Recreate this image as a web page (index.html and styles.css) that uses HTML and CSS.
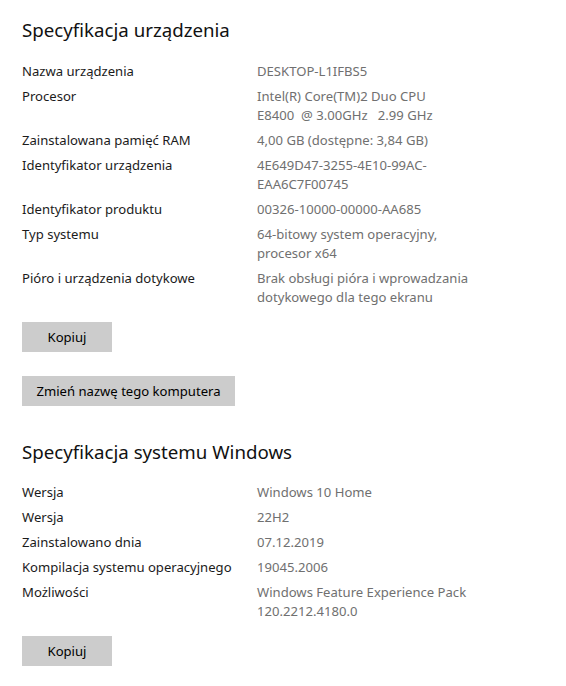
FILE: index.html
```html
<!DOCTYPE html>
<html lang="pl">
<head>
	<meta charset="UTF-8">
	<meta name="viewport" content="width=device-width, initial-scale=1.0">
	<title>Informacje</title>
	<link rel="stylesheet" href="styles.css">
</head>
<body>
	<div id="about">
		<section class="block">
			<h2 class="title">Specyfikacja urządzenia</h2>
			<dl class="specs">
				<dt>Nazwa urządzenia</dt>
				<dd>DESKTOP-L1IFBS5</dd>
				<dt>Procesor</dt>
				<dd>Intel(R) Core(TM)2 Duo CPU<br>E8400&nbsp; @ 3.00GHz &nbsp; 2.99 GHz</dd>
				<dt>Zainstalowana pamięć RAM</dt>
				<dd>4,00 GB (dostępne: 3,84 GB)</dd>
				<dt>Identyfikator urządzenia</dt>
				<dd>4E649D47-3255-4E10-99AC-<br>EAA6C7F00745</dd>
				<dt>Identyfikator produktu</dt>
				<dd>00326-10000-00000-AA685</dd>
				<dt>Typ systemu</dt>
				<dd>64-bitowy system operacyjny,<br>procesor x64</dd>
				<dt>Pióro i urządzenia dotykowe</dt>
				<dd>Brak obsługi pióra i wprowadzania<br>dotykowego dla tego ekranu</dd>
			</dl>
			<div class="buttons">
				<button class="btn copy">Kopiuj</button>
				<button class="btn rename">Zmień nazwę tego komputera</button>
			</div>
		</section>

		<section class="block">
			<h2 class="title">Specyfikacja systemu Windows</h2>
			<dl class="specs">
				<dt>Wersja</dt>
				<dd>Windows 10 Home</dd>
				<dt>Wersja</dt>
				<dd>22H2</dd>
				<dt>Zainstalowano dnia</dt>
				<dd>07.12.2019</dd>
				<dt>Kompilacja systemu operacyjnego</dt>
				<dd>19045.2006</dd>
				<dt>Możliwości</dt>
				<dd>Windows Feature Experience Pack<br>120.2212.4180.0</dd>
			</dl>
			<div class="buttons">
				<button class="btn copy">Kopiuj</button>
			</div>
		</section>
	</div>
</body>
</html>
```

FILE: styles.css
```css
:root{
	--label-color: #1b1b1b;
	--value-color: #707070;
	--button-bg: #cccccc;
}

body{
	margin: 0;
	background: #fff;
	font-family: "Noto Sans", "Open Sans", Arial, sans-serif;
	font-size: 13.1px;
	color: var(--label-color);
}

#about{
	padding: 16px 0 0 22px;
}

.block + .block{
	margin-top: 32px;
}

.title{
	margin: 0;
	font-size: 18.7px;
	font-weight: 400;
	line-height: 28px;
	color: #111;
}

.specs{
	display: grid;
	grid-template-columns: 235px auto;
	row-gap: 6px;
	margin: 17.5px 0 0;
	line-height: 19px;
}

.specs dt{
	margin: 0;
}

.specs dd{
	margin: 0;
	color: var(--value-color);
}

.buttons{
	display: flex;
	flex-direction: column;
	align-items: flex-start;
	gap: 24px;
	margin-top: 15px;
}

.btn{
	height: 30px;
	border: none;
	background: var(--button-bg);
	font-family: inherit;
	font-size: 13.1px;
	color: #000;
	padding: 0;
}

.copy{
	width: 90px;
}

.rename{
	width: 213px;
}
```
